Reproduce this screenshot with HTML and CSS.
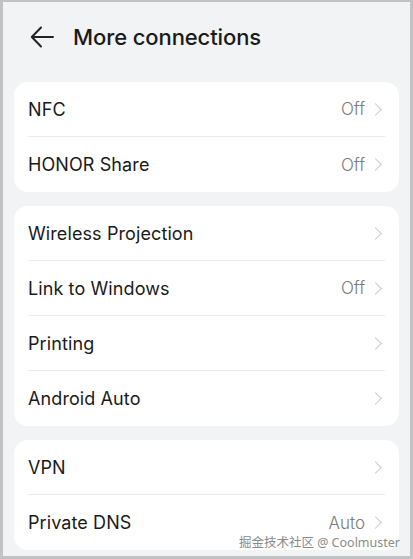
FILE: index.html
```html
<!DOCTYPE html>
<html lang="en">
<head>
    <meta charset="UTF-8">
    <meta name="viewport" content="width=device-width, initial-scale=1.0">
    <title>More connections</title>
    <link rel="stylesheet" href="styles.css">
</head>
<body>
    <div class="screen">
        <div class="header">
            <svg class="back" width="24" height="22" viewBox="0 0 24 22">
                <path d="M23 11H2M11 1.5L1.8 11L11 20.5" fill="none" stroke="#222" stroke-width="2" stroke-linecap="round" stroke-linejoin="round"/>
            </svg>
            <h1>More connections</h1>
        </div>

        <div class="card">
            <div class="row">
                <span class="label">NFC</span>
                <span class="value">Off</span>
                <span class="chev"></span>
            </div>
            <div class="row">
                <span class="label">HONOR Share</span>
                <span class="value">Off</span>
                <span class="chev"></span>
            </div>
        </div>

        <div class="card">
            <div class="row">
                <span class="label">Wireless Projection</span>
                <span class="chev"></span>
            </div>
            <div class="row">
                <span class="label">Link to Windows</span>
                <span class="value">Off</span>
                <span class="chev"></span>
            </div>
            <div class="row">
                <span class="label">Printing</span>
                <span class="chev"></span>
            </div>
            <div class="row">
                <span class="label">Android Auto</span>
                <span class="chev"></span>
            </div>
        </div>

        <div class="card">
            <div class="row">
                <span class="label">VPN</span>
                <span class="chev"></span>
            </div>
            <div class="row">
                <span class="label">Private DNS</span>
                <span class="value">Auto</span>
                <span class="chev"></span>
            </div>
        </div>

        <div class="watermark">掘金技术社区 @ Coolmuster</div>
    </div>
</body>
</html>
```

FILE: styles.css
```css
body {
    margin: 0;
    font-family: Inter, "Noto Sans", sans-serif;
    color: #1a1a1a;
}
.screen {
    position: relative;
    box-sizing: border-box;
    width: 413px;
    height: 559px;
    overflow: hidden;
    background-color: #f1f3f5;
    border-style: solid;
    border-color: #c2c2c2;
    border-width: 2px 3px 3px 3px;
    padding: 0 11px;
}
.header {
    display: flex;
    align-items: center;
    height: 70px;
    padding-left: 16px;
    margin-bottom: 10px;
}
.back {
    margin-right: 19px;
}
.header h1 {
    margin: 0;
    font-size: 22px;
    font-weight: 500;
    letter-spacing: -0.1px;
}
.card {
    background-color: #fff;
    border-radius: 14px;
    padding: 0 14px;
    margin-bottom: 14px;
}
.row {
    display: flex;
    align-items: center;
    height: 55px;
    border-bottom: 1px solid #ebebeb;
    box-sizing: border-box;
}
.row:last-child {
    border-bottom: none;
}
.label {
    flex: 1;
    font-size: 18px;
    font-weight: 400;
    letter-spacing: 0.1px;
}
.value {
    font-size: 17px;
    font-weight: 300;
    color: #7a7a7a;
    margin-right: 6px;
}
.chev {
    width: 8px;
    height: 8px;
    border-top: 1.5px solid #c8c8c8;
    border-right: 1.5px solid #c8c8c8;
    transform: rotate(45deg);
    margin-right: 5px;
}
.watermark {
    position: absolute;
    right: 10px;
    bottom: 5px;
    font-size: 12.5px;
    color: #8a8a8a;
    font-family: "Noto Sans", "Noto Sans CJK SC", sans-serif;
    text-shadow: 0 0 2px #fff, 0 0 2px #fff;
}
```
